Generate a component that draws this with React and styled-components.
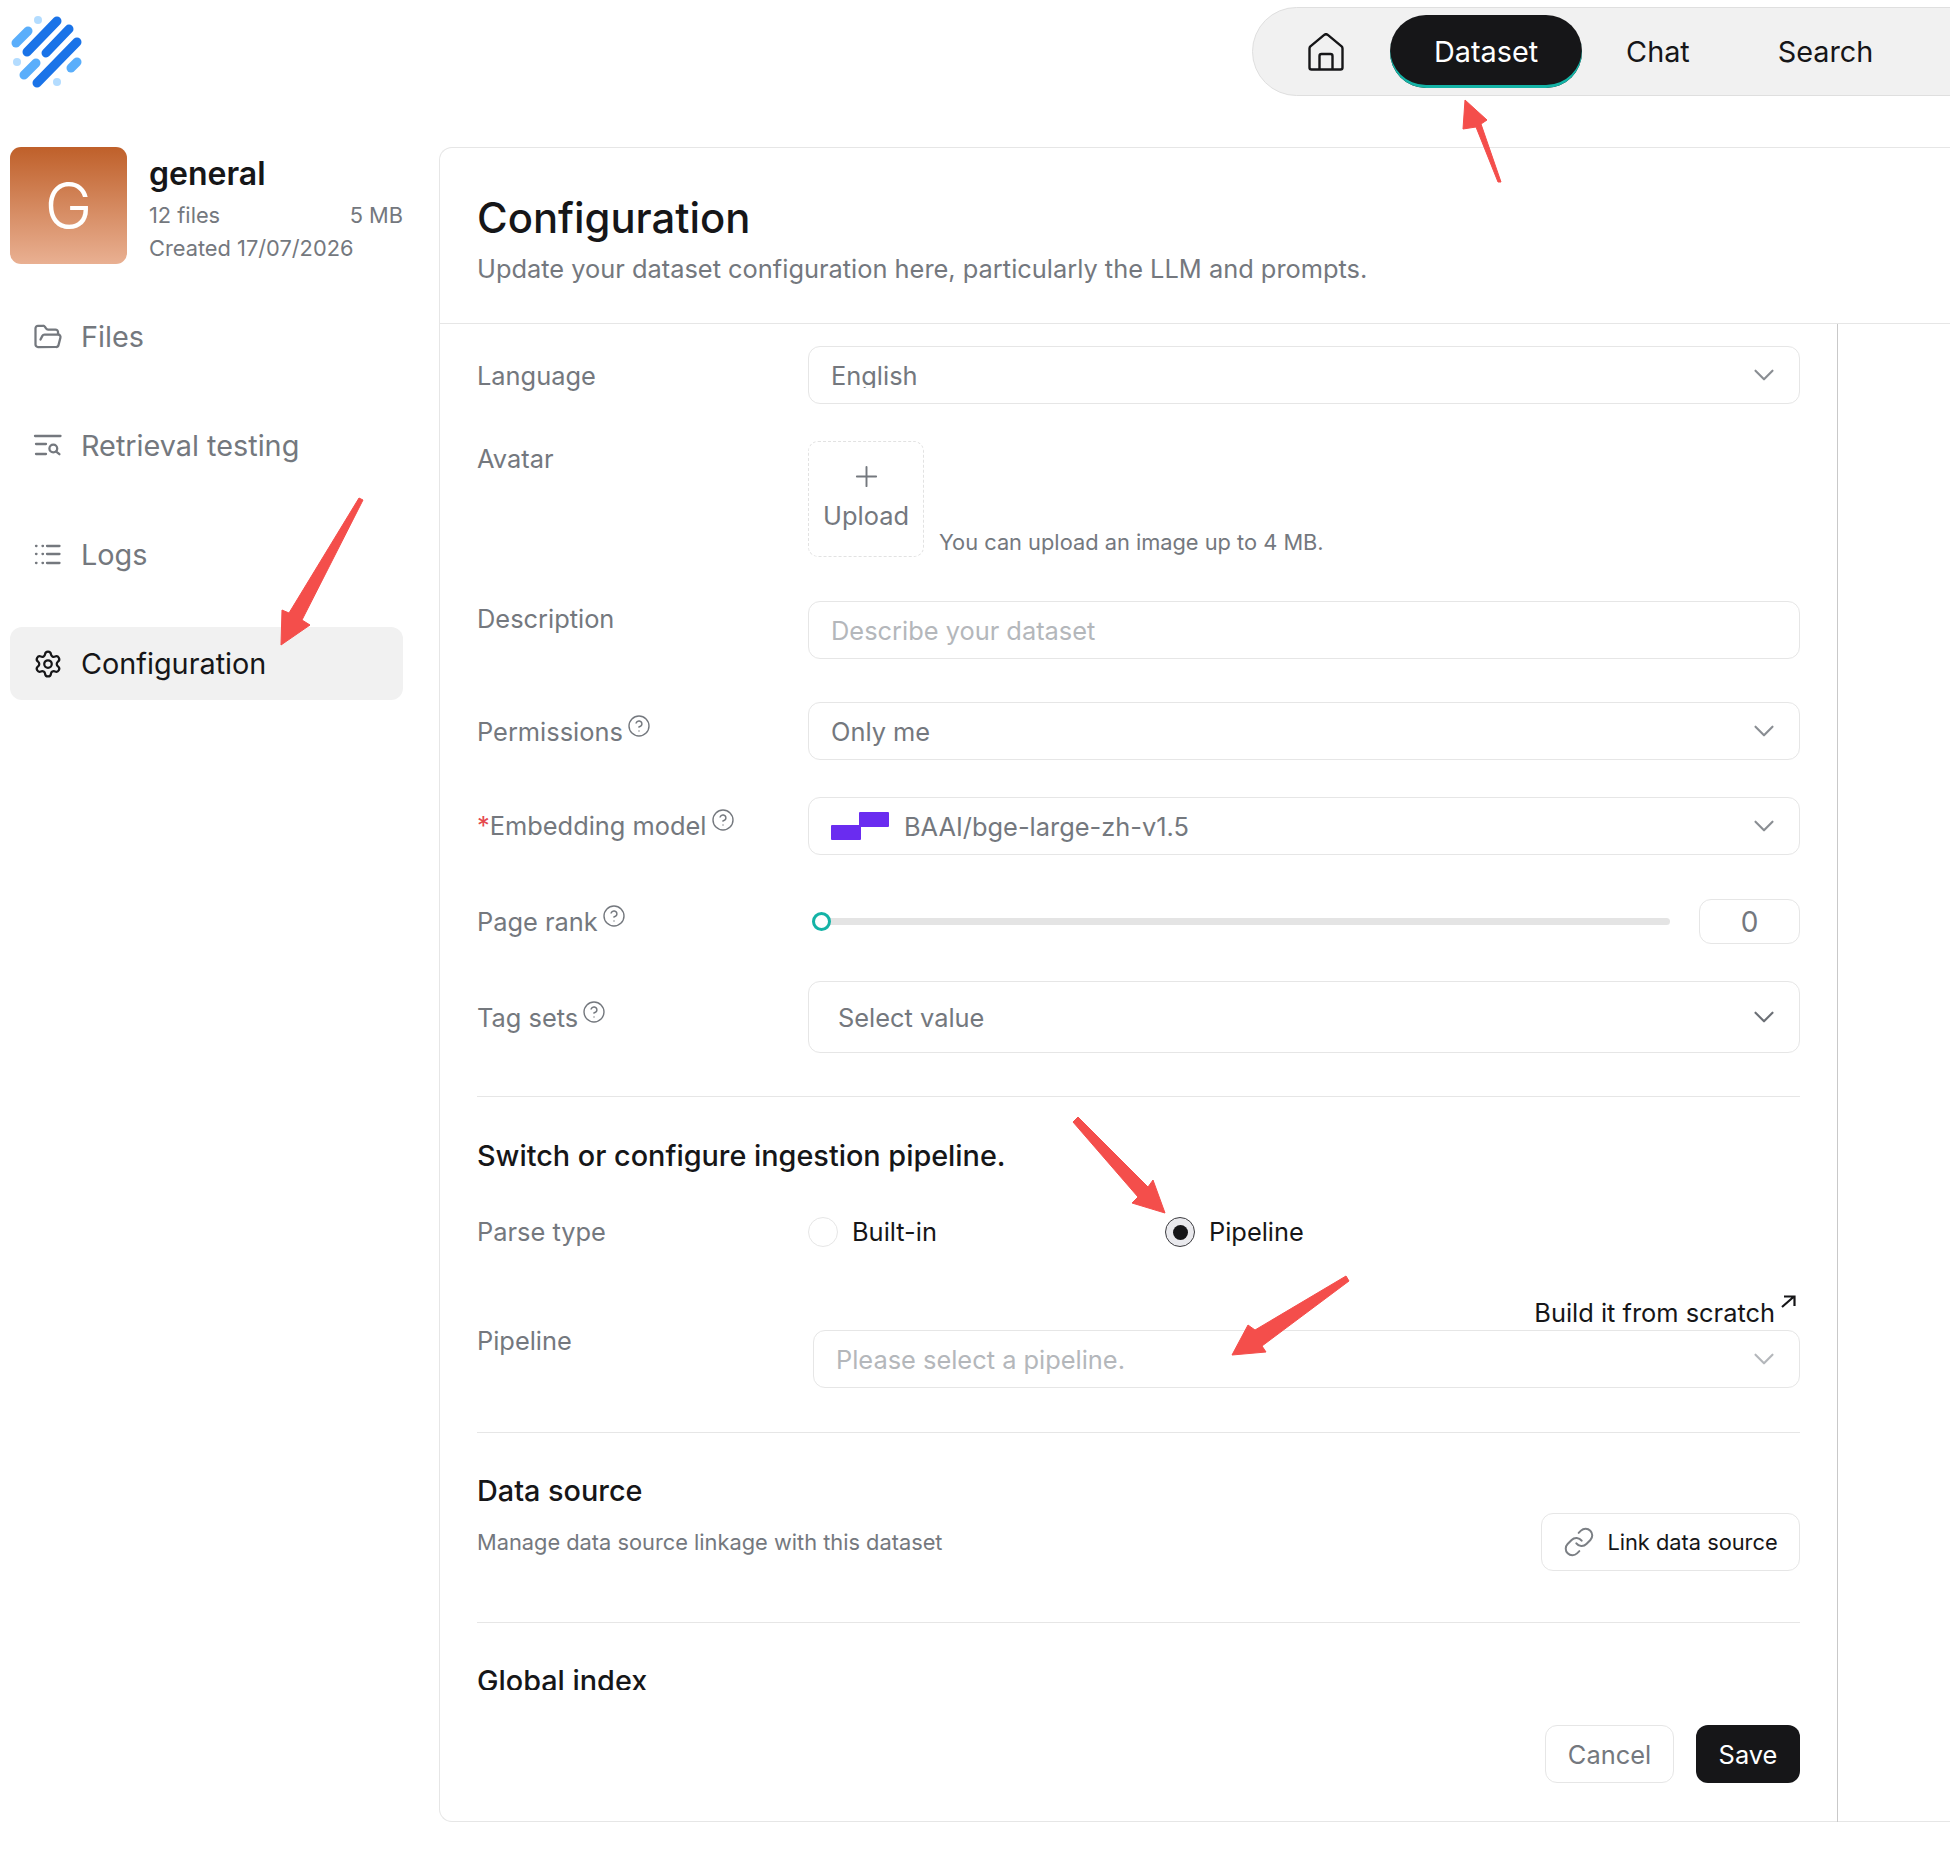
import React from 'react';
import styled, { createGlobalStyle } from 'styled-components';
import { ChevronDown, CircleHelp, FolderOpen, Link, Plus, Settings } from 'lucide-react';

const GlobalStyle = createGlobalStyle`
  * { box-sizing: border-box; }
  html, body { margin: 0; padding: 0; background: #fff; }
  body { font-family: Inter, "Noto Sans", sans-serif; color: #161618; }
`;

const gray = '#74787e';
const line = '#e6e6e6';

const Page = styled.div`
  position: relative;
  width: 1950px;
  height: 1857px;
  overflow: hidden;
  background: #fff;
`;

const Header = styled.header`
  display: flex;
  justify-content: space-between;
  align-items: flex-start;
  height: 147px;
  padding-top: 7px;
`;

const Logo = styled.svg`
  width: 90px;
  height: 90px;
  margin-top: 3px;
  margin-left: 3px;
`;

const NavPill = styled.nav`
  display: flex;
  align-items: center;
  width: 718px;
  height: 89px;
  margin-right: -20px;
  background: #f1f1f1;
  border: 1px solid #dfdfdf;
  border-radius: 45px 0 0 45px;
`;

const HomeLink = styled.a`
  display: flex;
  padding: 0 46px 0 55px;
`;

const HomeIcon = styled.svg`
  width: 36px;
  height: 38px;
  fill: none;
  stroke: #161618;
  stroke-width: 2.4;
  stroke-linejoin: round;
`;

const NavLink = styled.a`
  display: flex;
  align-items: center;
  height: 73px;
  padding: 0 44px;
  font-size: 28.8px;
  border-radius: 36px;
  color: ${p => (p.$active ? '#fff' : '#161618')};
  background: ${p => (p.$active ? '#161618' : 'transparent')};
  box-shadow: ${p => (p.$active ? 'inset 0 -3px 0 #14b3a6' : 'none')};
`;

const Body = styled.div`
  display: flex;
`;

const Sidebar = styled.aside`
  flex: none;
  width: 439px;
  padding: 0 36px 0 10px;
`;

const DatasetCard = styled.div`
  display: flex;
  gap: 22px;
  height: 117px;
`;

const Avatar = styled.div`
  flex: none;
  display: flex;
  align-items: center;
  justify-content: center;
  width: 117px;
  height: 117px;
  border-radius: 11px;
  background: linear-gradient(180deg, #bf602a 0%, #e9b092 100%);
  color: #fff;
  font-size: 64px;
  font-weight: 300;
`;

const DatasetInfo = styled.div`
  flex: 1;
  min-width: 0;
`;

const DatasetName = styled.div`
  margin-top: 8px;
  font-size: 32px;
  line-height: 38px;
  font-weight: 600;
`;

const MetaRow = styled.div`
  display: flex;
  justify-content: space-between;
  margin-top: ${p => p.$top}px;
  font-size: 21.8px;
  line-height: 27px;
  color: ${gray};
`;

const Menu = styled.div`
  display: flex;
  flex-direction: column;
  gap: 36px;
  margin-top: 36px;
`;

const MenuItem = styled.a`
  display: flex;
  align-items: center;
  gap: 18px;
  height: 73px;
  padding-left: 23px;
  border-radius: 12px;
  font-size: 28.8px;
  color: ${p => (p.$active ? '#161618' : gray)};
  background: ${p => (p.$active ? '#f1f1f1' : 'transparent')};
`;

const MenuIcon = styled.svg`
  flex: none;
  width: 30px;
  height: 30px;
  fill: none;
  stroke: currentColor;
  stroke-width: 2.3;
  stroke-linecap: round;
  stroke-linejoin: round;
`;

const Panel = styled.main`
  flex: 1;
  display: flex;
  flex-direction: column;
  height: 1675px;
  border: 1px solid ${line};
  border-right: none;
  border-radius: 13px 0 0 13px;
`;

const PanelHeader = styled.div`
  flex: none;
  height: 176px;
  padding: 45px 0 0 37px;
  border-bottom: 1px solid ${line};
`;

const PanelTitle = styled.h1`
  margin: 0;
  font-size: 41.8px;
  line-height: 50px;
  font-weight: 500;
`;

const PanelSubtitle = styled.p`
  margin: 10px 0 0;
  font-size: 25.4px;
  line-height: 32px;
  color: ${gray};
`;

const FormColumn = styled.div`
  flex: none;
  display: flex;
  flex-direction: column;
  width: 1398px;
  height: 1498px;
  border-right: 1px solid #c9c9c9;
`;

// scroll area of the form, the last section runs under the footer
const FormScroll = styled.div`
  flex: none;
  height: 1366px;
  overflow: hidden;
  padding: 22px 37px 0;
`;

const Row = styled.div`
  display: grid;
  grid-template-columns: 331px 1fr;
  align-items: ${p => p.$align || 'center'};
  margin-top: ${p => p.$top || 0}px;
`;

const Label = styled.label`
  display: flex;
  align-items: flex-start;
  font-size: 25.4px;
  line-height: 30px;
  color: ${gray};
  padding-top: ${p => p.$top || 0}px;
`;

const Required = styled.span`
  color: #e5484d;
`;

const Help = styled(CircleHelp)`
  flex: none;
  margin: -3px 0 0 4px;
  width: 24px;
  height: 24px;
  stroke-width: 1.4;
`;

const Select = styled.div`
  display: flex;
  align-items: center;
  height: ${p => p.$height || 58}px;
  margin-left: ${p => p.$indent || 0}px;
  padding: 0 18px 0 ${p => p.$pad || 22}px;
  border: 1px solid ${line};
  border-radius: 12px;
  font-size: 25.4px;
  color: ${p => (p.$muted ? '#b4b7bb' : gray)};
`;

const SelectText = styled.span`
  flex: 1;
  min-width: 0;
`;

// the selected value in the reference has its descender cut off by the control
const ClippedText = styled(SelectText)`
  height: 25px;
  line-height: 25px;
  overflow: hidden;
`;

const Arrow = styled(ChevronDown)`
  flex: none;
  width: 34px;
  height: 34px;
  stroke-width: 1.5;
  color: ${p => p.$color || '#8a8e93'};
`;

const UploadRow = styled.div`
  display: flex;
  align-items: flex-end;
  gap: 15px;
`;

const UploadBox = styled.div`
  display: flex;
  flex-direction: column;
  align-items: center;
  gap: 7px;
  width: 116px;
  height: 116px;
  padding-top: 18px;
  border: 1px dashed #e2e2e2;
  border-radius: 10px;
  font-size: 25.4px;
  line-height: 32px;
  color: ${gray};
`;

const UploadHint = styled.span`
  padding-bottom: 1px;
  font-size: 21.8px;
  line-height: 28px;
  color: ${gray};
`;

const ModelLogo = styled.svg`
  flex: none;
  width: 58px;
  height: 28px;
  margin-right: 15px;
`;

const SliderRow = styled.div`
  display: flex;
  align-items: center;
  gap: 29px;
`;

const Track = styled.div`
  flex: 1;
  display: flex;
  align-items: center;
  height: 7px;
  margin-left: 4px;
  border-radius: 4px;
  background: #e4e4e4;
`;

const Thumb = styled.div`
  width: 19px;
  height: 19px;
  border: 3.5px solid #14b3a6;
  border-radius: 50%;
  background: #fff;
`;

const NumberBox = styled.div`
  display: flex;
  align-items: center;
  justify-content: center;
  width: 101px;
  height: 45px;
  border: 1px solid ${line};
  border-radius: 12px;
  font-size: 28px;
  color: ${gray};
`;

const Divider = styled.hr`
  height: 1px;
  margin: ${p => p.$top}px 0 0;
  border: none;
  background: ${line};
`;

const SectionTitle = styled.h2`
  margin: ${p => p.$top}px 0 0;
  font-size: 28.8px;
  line-height: 34px;
  font-weight: 500;
`;

const Radios = styled.div`
  display: grid;
  grid-template-columns: 357px 1fr;
`;

const RadioOption = styled.div`
  display: flex;
  align-items: center;
  gap: 14px;
  font-size: 25.4px;
  line-height: 30px;
`;

const RadioCircle = styled.span`
  display: flex;
  align-items: center;
  justify-content: center;
  width: 30px;
  height: 30px;
  border: 1px solid ${p => (p.$checked ? '#3c3c40' : line)};
  border-radius: 50%;
  background: ${p => (p.$checked ? '#e9e9ed' : '#fff')};
`;

const RadioDot = styled.span`
  width: 15px;
  height: 15px;
  border-radius: 50%;
  background: #161618;
`;

const ScratchLink = styled.a`
  display: flex;
  justify-content: flex-end;
  align-items: flex-start;
  gap: 5px;
  height: 32px;
  padding-right: 4px;
  font-size: 25.4px;
  line-height: 30px;
  color: #161618;
`;

const ScratchIcon = styled.svg`
  width: 16px;
  height: 13px;
  margin-top: -3px;
  fill: none;
  stroke: #161618;
  stroke-width: 2.2;
`;

const SourceRow = styled.div`
  display: flex;
  justify-content: space-between;
  align-items: center;
  margin-top: 5px;
`;

const SourceText = styled.p`
  margin: 0;
  font-size: 21.8px;
  line-height: 28px;
  color: ${gray};
`;

const OutlineButton = styled.button`
  display: flex;
  align-items: center;
  justify-content: center;
  gap: ${p => p.$gap || 0}px;
  width: ${p => p.$width}px;
  height: 58px;
  padding: 0;
  border: 1px solid ${line};
  border-radius: 12px;
  background: #fff;
  font-family: inherit;
  font-size: ${p => p.$size || 25.4}px;
  color: ${p => p.$color || gray};
`;

const PrimaryButton = styled(OutlineButton)`
  border: none;
  background: #161618;
  color: #fff;
`;

const Footer = styled.div`
  display: flex;
  justify-content: flex-end;
  gap: 22px;
  padding: 35px 37px 0 0;
`;

const Annotations = styled.svg`
  position: absolute;
  top: 0;
  left: 0;
  width: 1950px;
  height: 1857px;
  pointer-events: none;
`;

const redArrows = [
  '1465,100 1487,120 1481,124 1501,182 1498,182 1476,127 1463,129',
  '363,500 359,498 289,613 282,610 281,645 310,625 302,620',
  '1073,1122 1078,1117 1148,1187 1153,1180 1165,1213 1132,1203 1138,1197',
  '1349,1281 1346,1276 1255,1330 1248,1325 1232,1355 1266,1352 1262,1346',
];

const logoBars = [
  [27, 52, 57, 21, '#1a73e8'],
  [46, 53, 69, 29, '#1a73e8'],
  [37, 83, 77, 42, '#1a73e8'],
  [16, 43, 28, 31, '#5aaefb'],
  [24, 75, 36, 63, '#5aaefb'],
  [71, 68, 77, 62, '#5aaefb'],
];

const logoDots = [[38, 20], [17, 62], [57, 82]];

export default function App() {
  return (
    <Page>
      <GlobalStyle />
      <Header>
        <Logo viewBox="3 10 90 90">
          {logoBars.map(([x1, y1, x2, y2, color]) => (
            <line key={`${x1}-${y1}`} x1={x1} y1={y1} x2={x2} y2={y2} stroke={color} strokeWidth="9" strokeLinecap="round" />
          ))}
          {logoDots.map(([cx, cy]) => (
            <circle key={cx} cx={cx} cy={cy} r="4" fill="#b3dcff" />
          ))}
        </Logo>
        <NavPill>
          <HomeLink>
            <HomeIcon viewBox="0 0 36 38">
              <path d="M3.5 36.5h29a2 2 0 0 0 2-2V15.5a3 3 0 0 0-.9-2.1L20.1 2.2a3 3 0 0 0-4.2 0L2.4 13.4a3 3 0 0 0-.9 2.1v19a2 2 0 0 0 2 2z" />
              <path d="M11.5 36.5V23a2 2 0 0 1 2-2h9a2 2 0 0 1 2 2v13.5" />
            </HomeIcon>
          </HomeLink>
          <NavLink $active>Dataset</NavLink>
          <NavLink>Chat</NavLink>
          <NavLink>Search</NavLink>
        </NavPill>
      </Header>
      <Body>
        <Sidebar>
          <DatasetCard>
            <Avatar>G</Avatar>
            <DatasetInfo>
              <DatasetName>general</DatasetName>
              <MetaRow $top={9}><span>12 files</span><span>5 MB</span></MetaRow>
              <MetaRow $top={6}><span>Created 17/07/2026</span></MetaRow>
            </DatasetInfo>
          </DatasetCard>
          <Menu>
            <MenuItem><FolderOpen size={30} strokeWidth={1.8} />Files</MenuItem>
            <MenuItem>
              <MenuIcon viewBox="0 0 30 30">
                <path d="M2 5h25.5M3 13h10M3 23h10" />
                <circle cx="20.3" cy="17.5" r="3.9" />
                <path d="M23.2 20.6l3.2 2.6" />
              </MenuIcon>
              Retrieval testing
            </MenuItem>
            <MenuItem>
              <MenuIcon viewBox="0 0 30 30">
                <path d="M3 6h.5M9.5 6h.5M14 6h12.5M3 14h.5M9.5 14h.5M14 14h12.5M3 23h.5M9.5 23h.5M14 23h12.5" />
              </MenuIcon>
              Logs
            </MenuItem>
            <MenuItem $active><Settings size={30} strokeWidth={1.8} />Configuration</MenuItem>
          </Menu>
        </Sidebar>
        <Panel>
          <PanelHeader>
            <PanelTitle>Configuration</PanelTitle>
            <PanelSubtitle>Update your dataset configuration here, particularly the LLM and prompts.</PanelSubtitle>
          </PanelHeader>
          <FormColumn>
            <FormScroll>
              <Row>
                <Label $top={2}>Language</Label>
                <Select><ClippedText>English</ClippedText><Arrow /></Select>
              </Row>
              <Row $top={37} $align="start">
                <Label $top={3}>Avatar</Label>
                <UploadRow>
                  <UploadBox><Plus size={33} strokeWidth={1.4} />Upload</UploadBox>
                  <UploadHint>You can upload an image up to 4 MB.</UploadHint>
                </UploadRow>
              </Row>
              <Row $top={44} $align="start">
                <Label $top={3}>Description</Label>
                <Select $muted><SelectText>Describe your dataset</SelectText></Select>
              </Row>
              <Row $top={43}>
                <Label $top={2}>Permissions<Help /></Label>
                <Select><SelectText>Only me</SelectText><Arrow /></Select>
              </Row>
              <Row $top={37}>
                <Label><Required>*</Required>Embedding model<Help /></Label>
                <Select>
                  <ModelLogo viewBox="0 0 58 28">
                    <path d="M1 13h29v14a1 1 0 0 1-1 1H1a1 1 0 0 1-1-1V14a1 1 0 0 1 1-1z" fill="#6a2cf0" />
                    <path d="M29 0h28a1 1 0 0 1 1 1v13a1 1 0 0 1-1 1H28V1a1 1 0 0 1 1-1z" fill="#6a2cf0" />
                  </ModelLogo>
                  <SelectText>BAAI/bge-large-zh-v1.5</SelectText>
                  <Arrow />
                </Select>
              </Row>
              <Row $top={44}>
                <Label>Page rank<Help /></Label>
                <SliderRow>
                  <Track><Thumb /></Track>
                  <NumberBox>0</NumberBox>
                </SliderRow>
              </Row>
              <Row $top={37}>
                <Label $top={2}>Tag sets<Help /></Label>
                <Select $height={72} $pad={29}><SelectText>Select value</SelectText><Arrow $color="#6c7076" /></Select>
              </Row>
              <Divider $top={43} />
              <SectionTitle $top={42}>Switch or configure ingestion pipeline.</SectionTitle>
              <Row $top={44}>
                <Label>Parse type</Label>
                <Radios>
                  <RadioOption><RadioCircle />Built-in</RadioOption>
                  <RadioOption><RadioCircle $checked><RadioDot /></RadioCircle>Pipeline</RadioOption>
                </Radios>
              </Row>
              <Row $top={51} $align="start">
                <Label $top={28}>Pipeline</Label>
                <div>
                  <ScratchLink>
                    Build it from scratch
                    <ScratchIcon viewBox="0 0 16 13">
                      <path d="M2 12L14 1.5M4 1.5h10.5V11" />
                    </ScratchIcon>
                  </ScratchLink>
                  <Select $muted $indent={5}><SelectText>Please select a pipeline.</SelectText><Arrow $color="#b4b7bb" /></Select>
                </div>
              </Row>
              <Divider $top={44} />
              <SectionTitle $top={41}>Data source</SectionTitle>
              <SourceRow>
                <SourceText>Manage data source linkage with this dataset</SourceText>
                <OutlineButton $width={259} $gap={12} $size={21.8} $color="#161618"><Link size={32} strokeWidth={1.5} color="#7b7f84" />Link data source</OutlineButton>
              </SourceRow>
              <Divider $top={51} />
              <SectionTitle $top={41}>Global index</SectionTitle>
            </FormScroll>
            <Footer>
              <OutlineButton $width={129}>Cancel</OutlineButton>
              <PrimaryButton $width={104}>Save</PrimaryButton>
            </Footer>
          </FormColumn>
        </Panel>
      </Body>
      <Annotations viewBox="0 0 1950 1857">
        {redArrows.map(points => (
          <polygon key={points} points={points} fill="#f44e4b" stroke="#f44e4b" strokeWidth="1" strokeLinejoin="round" />
        ))}
      </Annotations>
    </Page>
  );
}
